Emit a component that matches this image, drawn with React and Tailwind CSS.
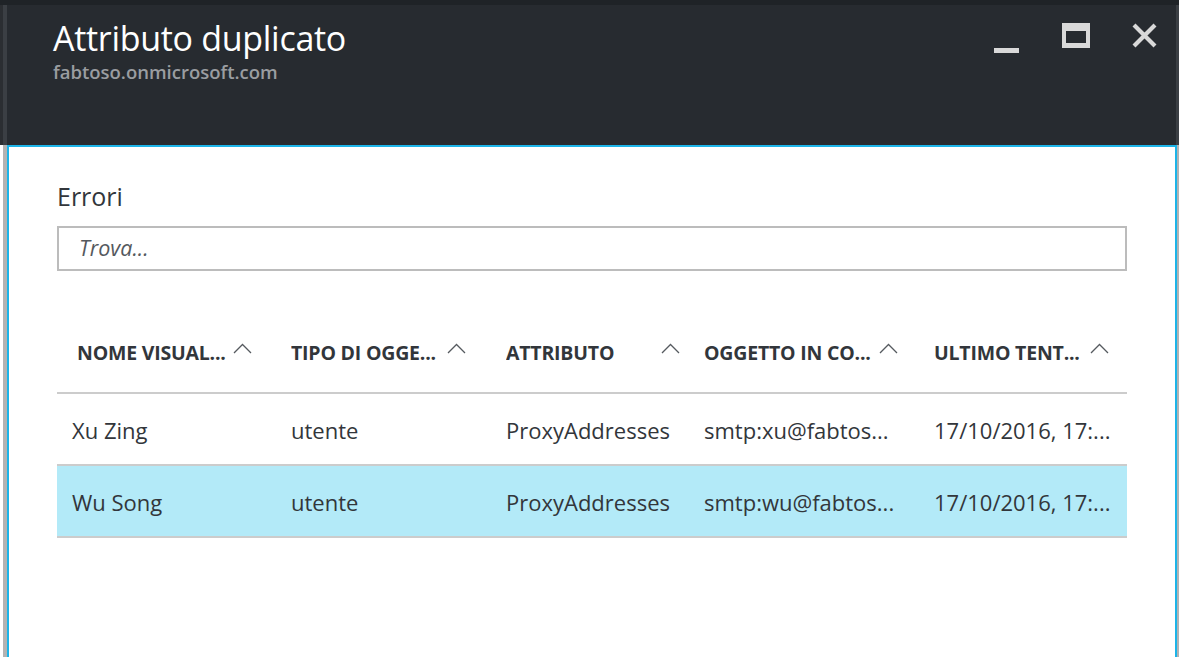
const rows = [
  { name: 'Xu Zing', type: 'utente', attr: 'ProxyAddresses', obj: 'smtp:xu@fabtos...', last: '17/10/2016, 17:...', selected: false },
  { name: 'Wu Song', type: 'utente', attr: 'ProxyAddresses', obj: 'smtp:wu@fabtos...', last: '17/10/2016, 17:...', selected: true },
];

const cols = [
  { label: 'NOME VISUAL...', w: 'w-[219px]', lw: 'w-[156px]', first: true },
  { label: 'TIPO DI OGGE...', w: 'w-[215px]', lw: 'w-[156px]' },
  { label: 'ATTRIBUTO', w: 'w-[198px]', lw: 'w-[155px]' },
  { label: 'OGGETTO IN CO...', w: 'w-[230px]', lw: 'w-[175px]' },
  { label: 'ULTIMO TENT...', w: 'flex-1', lw: 'w-[156px]' },
];

function Chevron() {
  return (
    <svg width="19" height="11" viewBox="0 0 19 11" className="shrink-0 -mt-[9px]">
      <polyline points="1,10 9.5,1.5 18,10" fill="none" stroke="#555a5f" strokeWidth="1.3" />
    </svg>
  );
}

function Cell({ col, children }) {
  return (
    <div className={`${col.w} pl-[15px] whitespace-nowrap overflow-hidden`}>{children}</div>
  );
}

export default function App() {
  return (
    <div className="w-[1179px] h-[657px] overflow-hidden bg-white flex flex-col" style={{ fontFamily: '"Open Sans", "Noto Sans", sans-serif' }}>
      <div className="h-[5px] bg-[#1f2327]" />

      {/* blade header */}
      <div className="h-[140px] flex bg-[#272b30]">
        <div className="w-[3px] bg-[#2b2e32]" />
        <div className="w-[4px] bg-[#3b3f44]" />
        <div className="flex-1 flex justify-between pl-[46px]">
          <div className="pt-[13px]">
            <h1 className="text-[34px] leading-[40px] text-white tracking-[-0.3px]">Attributo duplicato</h1>
            <p className="text-[18.5px] leading-[24px] font-semibold text-[#9a9da1] mt-[2px]">fabtoso.onmicrosoft.com</p>
          </div>
          <div className="flex items-start pt-[18px] pr-[19px]">
            <div className="w-[25px] h-[5px] bg-[#d9d9d9] mt-[25px]" />
            <div className="w-[28px] h-[25px] ml-[43px] border-[#d9d9d9] border-t-[8px] border-x-[4px] border-b-[5px]" />
            <svg width="25" height="25" viewBox="0 0 25 25" className="ml-[42px]">
              <path d="M2 2 L23 23 M23 2 L2 23" stroke="#d9d9d9" strokeWidth="4.2" />
            </svg>
          </div>
        </div>
        <div className="w-[3px] bg-[#3b3f44]" />
      </div>

      <div className="flex-1 flex">
        <div className="w-[3px] bg-white" />
        <div className="w-[4px] bg-[#b3b3b3]" />
        <main className="flex-1 border-x-2 border-t-2 border-[#1cb4e8] px-[48px] pt-[34px] text-[#32363b]">
          <h2 className="text-[25px] leading-[30px]">Errori</h2>
          <div className="mt-[15px] h-[45px] border-2 border-[#bcbcbc] flex items-center pl-[20px]">
            <span className="italic text-[21.5px] text-[#55595e]">Trova...</span>
          </div>

          <div className="mt-[47px]">
            <div className="h-[76px] flex items-center pb-[4px] border-b-2 border-[#cccccc] text-[19.5px] font-bold tracking-[-0.2px]">
              {cols.map((c) => (
                <div key={c.label} className={`${c.w} ${c.first ? 'pl-[20px]' : 'pl-[15px]'} flex items-center`}>
                  <span className={`${c.lw} whitespace-nowrap overflow-hidden`}>{c.label}</span>
                  <Chevron />
                </div>
              ))}
            </div>
            {rows.map((r) => (
              <div key={r.name} className={`h-[72px] flex items-center pt-[3px] border-b-2 border-[#cccccc] text-[22px] ${r.selected ? 'bg-[#b3eaf8]' : ''}`}>
                <Cell col={cols[0]}>{r.name}</Cell>
                <Cell col={cols[1]}>{r.type}</Cell>
                <Cell col={cols[2]}>{r.attr}</Cell>
                <Cell col={cols[3]}>{r.obj}</Cell>
                <Cell col={cols[4]}>{r.last}</Cell>
              </div>
            ))}
          </div>
        </main>
        <div className="w-[2px] bg-[#b3b3b3]" />
      </div>
    </div>
  );
}
